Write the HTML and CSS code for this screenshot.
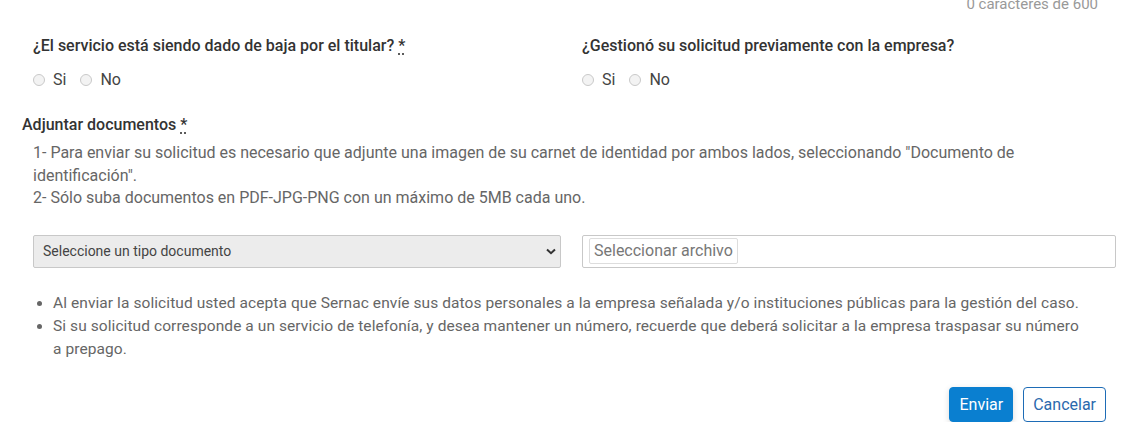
FILE: index.html
```html
<!DOCTYPE html>
<html lang="es">
<head>
  <meta charset="UTF-8">
  <title>Solicitud</title>
  <link rel="stylesheet" href="styles.css">
</head>
<body>
  <form class="form">
    <div class="counter">0 caracteres de 600</div>

    <div class="row questions">
      <div class="group">
        <p class="label">¿El servicio está siendo dado de baja por el titular? <abbr title="requerido">*</abbr></p>
        <div class="radios">
          <label><input type="radio" name="baja"> Si</label>
          <label><input type="radio" name="baja"> No</label>
        </div>
      </div>
      <div class="group">
        <p class="label">¿Gestionó su solicitud previamente con la empresa?</p>
        <div class="radios">
          <label><input type="radio" name="gestion"> Si</label>
          <label><input type="radio" name="gestion"> No</label>
        </div>
      </div>
    </div>

    <p class="label docs-title">Adjuntar documentos <abbr title="requerido">*</abbr></p>
    <div class="help">
      1- Para enviar su solicitud es necesario que adjunte una imagen de su carnet de identidad por ambos lados, seleccionando "Documento de identificación".<br>
      2- Sólo suba documentos en PDF-JPG-PNG con un máximo de 5MB cada uno.
    </div>

    <div class="row uploads">
      <div class="select-wrap">
        <select class="doc-type">
          <option>Seleccione un tipo documento</option>
          <option>Documento de identificación</option>
        </select>
        <svg class="chevron" width="10" height="7" viewBox="0 0 10 7"><path d="M1 1.5 L5 5.2 L9 1.5" fill="none" stroke="#333" stroke-width="2"/></svg>
      </div>
      <label class="file">
        <input type="file">
        <span class="file-btn">Seleccionar archivo</span>
      </label>
    </div>

    <ul class="notes">
      <li>Al enviar la solicitud usted acepta que Sernac envíe sus datos personales a la empresa señalada y/o instituciones públicas para la gestión del caso.</li>
      <li>Si su solicitud corresponde a un servicio de telefonía, y desea mantener un número, recuerde que deberá solicitar a la empresa traspasar su número<br>a prepago.</li>
    </ul>

    <div class="actions">
      <button type="submit" class="btn btn-primary">Enviar</button>
      <button type="button" class="btn btn-outline">Cancelar</button>
    </div>
  </form>
</body>
</html>
```

FILE: styles.css
```css
body {
  margin: 0;
  background-color: #fff;
  font-family: Roboto, "Liberation Sans", Arial, sans-serif;
  color: #333;
  overflow: hidden;
}
.form {
  width: 1136px;
  box-sizing: border-box;
  padding: 0 20px 0 22px;
}
.counter {
  margin-top: -6px;
  padding-right: 18px;
  text-align: right;
  font-size: 15px;
  line-height: 20px;
  color: #999;
}
.row {
  display: grid;
  grid-template-columns: 528px 534px;
  column-gap: 21px;
  padding-left: 11px;
}
.questions {
  margin-top: 21px;
}
.label {
  margin: 0;
  font-size: 16px;
  font-weight: 500;
  line-height: 22px;
  color: #333;
}
abbr {
  text-decoration: underline dotted;
  text-underline-offset: 3px;
  cursor: help;
}
.radios {
  display: flex;
  gap: 14px;
  margin-top: 12px;
  font-size: 16px;
  line-height: 22px;
  color: #444;
}
.radios label {
  display: flex;
  align-items: center;
  gap: 8px;
}
.radios input {
  appearance: none;
  width: 12px;
  height: 12px;
  margin: 0;
  border: 1px solid #c9c9c9;
  border-radius: 50%;
  background-color: #f3f3f3;
}
.docs-title {
  margin-top: 23px;
}
.help {
  padding-left: 11px;
  margin-top: 6px;
  font-size: 16px;
  line-height: 22.5px;
  color: #666;
}
.uploads {
  margin-top: 25px;
}
.select-wrap {
  position: relative;
}
.doc-type {
  width: 100%;
  height: 33px;
  appearance: none;
  padding: 0 9px;
  border: 1px solid #c8c8c8;
  border-radius: 2px;
  background-color: #ececec;
  font-family: inherit;
  font-size: 14px;
  color: #444;
}
.chevron {
  position: absolute;
  right: 5px;
  top: 13px;
  pointer-events: none;
}
.file {
  display: flex;
  align-items: center;
  height: 33px;
  box-sizing: border-box;
  padding: 0 6px;
  border: 1px solid #c8c8c8;
  border-radius: 2px;
  background-color: #fff;
}
.file input {
  display: none;
}
.file-btn {
  padding: 2px 4px;
  border: 1px solid #ddd;
  border-radius: 2px;
  font-size: 16px;
  line-height: 20px;
  color: #777;
}
.notes {
  margin: 24px 0 0;
  padding-left: 31px;
  font-size: 15.5px;
  letter-spacing: 0.08px;
  line-height: 23px;
  color: #666;
}
.actions {
  display: flex;
  justify-content: flex-end;
  gap: 10px;
  margin-top: 26px;
  padding-right: 10px;
}
.btn {
  height: 35px;
  padding: 0 9px;
  border-radius: 4px;
  font-family: inherit;
  font-size: 16px;
  cursor: pointer;
}
.btn-primary {
  border: 1px solid #0a7fd0;
  background-color: #0a7fd0;
  color: #fff;
  box-shadow: 0 2px 6px rgba(0, 0, 0, 0.15);
}
.btn-outline {
  border: 1px solid #1e6cb6;
  background-color: #fff;
  color: #2a69ad;
}
```
